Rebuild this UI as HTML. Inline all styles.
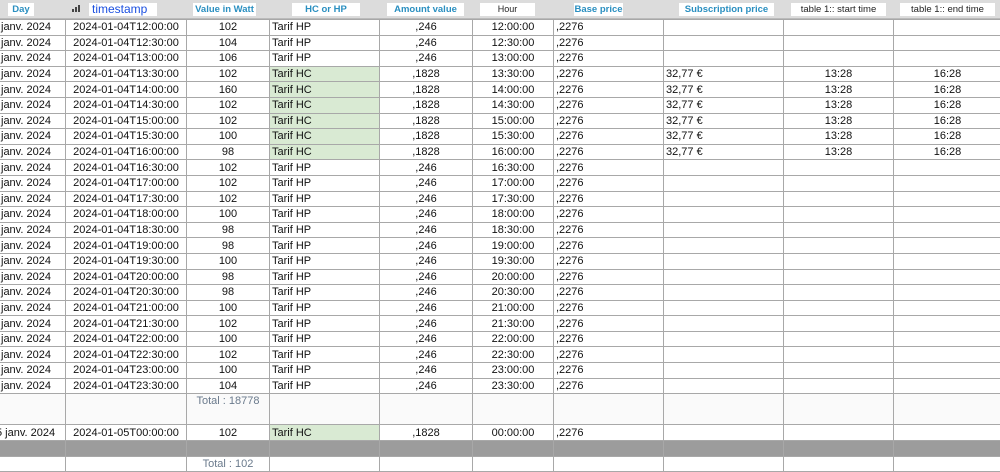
<!DOCTYPE html><html><head><style>
body{margin:0;width:1000px;height:461px;overflow:hidden;background:#fff;font-family:"Liberation Sans",sans-serif;font-size:11px;color:#111;position:relative}
.hd{position:absolute;left:0;top:0;width:1000px;height:18px;background:#dcdcdc;border-bottom:1px solid #bbb}
.lb{position:absolute;top:3px;height:13px;background:#fff;color:#2a8fc0;font-weight:bold;font-size:9.5px;line-height:13px;text-align:center}
table{position:absolute;left:-1px;top:19px;border-collapse:collapse;table-layout:fixed;width:1002px}
td{border:1px solid #a8a8a8;height:14.6px;padding:0 2px;white-space:nowrap;overflow:hidden;line-height:14px}
td.c{text-align:center}
td.g{background:#d9ead3}
td.d{padding-left:1px}
tr.tot td{height:30px;background:#fafafa;vertical-align:top}
tr.gr td{background:#9c9c9c;height:15px}
</style></head><body>
<div class="hd">
<div class="lb" style="left:8px;width:26px">Day</div>
<div style="position:absolute;left:72px;top:5px;width:10px;height:7px"><span style="position:absolute;left:0;bottom:0;width:2px;height:3px;background:#444"></span><span style="position:absolute;left:3px;bottom:0;width:2px;height:5px;background:#444"></span><span style="position:absolute;left:6px;bottom:0;width:2px;height:7px;background:#444"></span></div>
<div class="lb" style="left:89px;color:#1a4fe0;font-weight:normal;font-size:12px;text-align:left;padding-left:3px;width:65px">timestamp</div>
<div class="lb" style="left:193px;width:63px">Value in Watt</div>
<div class="lb" style="left:292px;width:68px">HC or HP</div>
<div class="lb" style="left:387px;width:77px">Amount value</div>
<div class="lb" style="left:480px;width:55px;color:#222;font-weight:normal;font-size:9px">Hour</div>
<div class="lb" style="left:574px;width:49px">Base price</div>
<div class="lb" style="left:679px;width:95px">Subscription price</div>
<div class="lb" style="left:791px;width:95px;color:#222;font-weight:normal;font-size:9.5px">table 1:: start time</div>
<div class="lb" style="left:900px;width:95px;color:#222;font-weight:normal;font-size:9.5px">table 1:: end time</div>
</div>
<table>
<colgroup><col style="width:66px"><col style="width:121px"><col style="width:83px"><col style="width:110px"><col style="width:93px"><col style="width:81px"><col style="width:110px"><col style="width:120px"><col style="width:110px"><col style="width:108px"></colgroup>
<tr><td class="d">janv. 2024</td><td class="c">2024-01-04T12:00:00</td><td class="c">102</td><td>Tarif HP</td><td class="c">,246</td><td class="c">12:00:00</td><td>,2276</td><td></td><td></td><td></td></tr>
<tr><td class="d">janv. 2024</td><td class="c">2024-01-04T12:30:00</td><td class="c">104</td><td>Tarif HP</td><td class="c">,246</td><td class="c">12:30:00</td><td>,2276</td><td></td><td></td><td></td></tr>
<tr><td class="d">janv. 2024</td><td class="c">2024-01-04T13:00:00</td><td class="c">106</td><td>Tarif HP</td><td class="c">,246</td><td class="c">13:00:00</td><td>,2276</td><td></td><td></td><td></td></tr>
<tr><td class="d">janv. 2024</td><td class="c">2024-01-04T13:30:00</td><td class="c">102</td><td class="g">Tarif HC</td><td class="c">,1828</td><td class="c">13:30:00</td><td>,2276</td><td>32,77 €</td><td class="c">13:28</td><td class="c">16:28</td></tr>
<tr><td class="d">janv. 2024</td><td class="c">2024-01-04T14:00:00</td><td class="c">160</td><td class="g">Tarif HC</td><td class="c">,1828</td><td class="c">14:00:00</td><td>,2276</td><td>32,77 €</td><td class="c">13:28</td><td class="c">16:28</td></tr>
<tr><td class="d">janv. 2024</td><td class="c">2024-01-04T14:30:00</td><td class="c">102</td><td class="g">Tarif HC</td><td class="c">,1828</td><td class="c">14:30:00</td><td>,2276</td><td>32,77 €</td><td class="c">13:28</td><td class="c">16:28</td></tr>
<tr><td class="d">janv. 2024</td><td class="c">2024-01-04T15:00:00</td><td class="c">102</td><td class="g">Tarif HC</td><td class="c">,1828</td><td class="c">15:00:00</td><td>,2276</td><td>32,77 €</td><td class="c">13:28</td><td class="c">16:28</td></tr>
<tr><td class="d">janv. 2024</td><td class="c">2024-01-04T15:30:00</td><td class="c">100</td><td class="g">Tarif HC</td><td class="c">,1828</td><td class="c">15:30:00</td><td>,2276</td><td>32,77 €</td><td class="c">13:28</td><td class="c">16:28</td></tr>
<tr><td class="d">janv. 2024</td><td class="c">2024-01-04T16:00:00</td><td class="c">98</td><td class="g">Tarif HC</td><td class="c">,1828</td><td class="c">16:00:00</td><td>,2276</td><td>32,77 €</td><td class="c">13:28</td><td class="c">16:28</td></tr>
<tr><td class="d">janv. 2024</td><td class="c">2024-01-04T16:30:00</td><td class="c">102</td><td>Tarif HP</td><td class="c">,246</td><td class="c">16:30:00</td><td>,2276</td><td></td><td></td><td></td></tr>
<tr><td class="d">janv. 2024</td><td class="c">2024-01-04T17:00:00</td><td class="c">102</td><td>Tarif HP</td><td class="c">,246</td><td class="c">17:00:00</td><td>,2276</td><td></td><td></td><td></td></tr>
<tr><td class="d">janv. 2024</td><td class="c">2024-01-04T17:30:00</td><td class="c">102</td><td>Tarif HP</td><td class="c">,246</td><td class="c">17:30:00</td><td>,2276</td><td></td><td></td><td></td></tr>
<tr><td class="d">janv. 2024</td><td class="c">2024-01-04T18:00:00</td><td class="c">100</td><td>Tarif HP</td><td class="c">,246</td><td class="c">18:00:00</td><td>,2276</td><td></td><td></td><td></td></tr>
<tr><td class="d">janv. 2024</td><td class="c">2024-01-04T18:30:00</td><td class="c">98</td><td>Tarif HP</td><td class="c">,246</td><td class="c">18:30:00</td><td>,2276</td><td></td><td></td><td></td></tr>
<tr><td class="d">janv. 2024</td><td class="c">2024-01-04T19:00:00</td><td class="c">98</td><td>Tarif HP</td><td class="c">,246</td><td class="c">19:00:00</td><td>,2276</td><td></td><td></td><td></td></tr>
<tr><td class="d">janv. 2024</td><td class="c">2024-01-04T19:30:00</td><td class="c">100</td><td>Tarif HP</td><td class="c">,246</td><td class="c">19:30:00</td><td>,2276</td><td></td><td></td><td></td></tr>
<tr><td class="d">janv. 2024</td><td class="c">2024-01-04T20:00:00</td><td class="c">98</td><td>Tarif HP</td><td class="c">,246</td><td class="c">20:00:00</td><td>,2276</td><td></td><td></td><td></td></tr>
<tr><td class="d">janv. 2024</td><td class="c">2024-01-04T20:30:00</td><td class="c">98</td><td>Tarif HP</td><td class="c">,246</td><td class="c">20:30:00</td><td>,2276</td><td></td><td></td><td></td></tr>
<tr><td class="d">janv. 2024</td><td class="c">2024-01-04T21:00:00</td><td class="c">100</td><td>Tarif HP</td><td class="c">,246</td><td class="c">21:00:00</td><td>,2276</td><td></td><td></td><td></td></tr>
<tr><td class="d">janv. 2024</td><td class="c">2024-01-04T21:30:00</td><td class="c">102</td><td>Tarif HP</td><td class="c">,246</td><td class="c">21:30:00</td><td>,2276</td><td></td><td></td><td></td></tr>
<tr><td class="d">janv. 2024</td><td class="c">2024-01-04T22:00:00</td><td class="c">100</td><td>Tarif HP</td><td class="c">,246</td><td class="c">22:00:00</td><td>,2276</td><td></td><td></td><td></td></tr>
<tr><td class="d">janv. 2024</td><td class="c">2024-01-04T22:30:00</td><td class="c">102</td><td>Tarif HP</td><td class="c">,246</td><td class="c">22:30:00</td><td>,2276</td><td></td><td></td><td></td></tr>
<tr><td class="d">janv. 2024</td><td class="c">2024-01-04T23:00:00</td><td class="c">100</td><td>Tarif HP</td><td class="c">,246</td><td class="c">23:00:00</td><td>,2276</td><td></td><td></td><td></td></tr>
<tr><td class="d">janv. 2024</td><td class="c">2024-01-04T23:30:00</td><td class="c">104</td><td>Tarif HP</td><td class="c">,246</td><td class="c">23:30:00</td><td>,2276</td><td></td><td></td><td></td></tr>
<tr class="tot"><td></td><td></td><td class="c" style="color:#6a7a8c">Total : 18778</td><td></td><td></td><td></td><td></td><td></td><td></td><td></td></tr>
<tr><td class="d"><span style="margin-left:-5px">5 janv. 2024</span></td><td class="c">2024-01-05T00:00:00</td><td class="c">102</td><td class="g">Tarif HC</td><td class="c">,1828</td><td class="c">00:00:00</td><td>,2276</td><td></td><td></td><td></td></tr>
<tr class="gr"><td></td><td></td><td></td><td></td><td></td><td></td><td></td><td></td><td></td><td></td></tr>
<tr><td></td><td></td><td class="c" style="color:#6a7a8c">Total : 102</td><td></td><td></td><td></td><td></td><td></td><td></td><td></td></tr>
</table>
</body></html>
